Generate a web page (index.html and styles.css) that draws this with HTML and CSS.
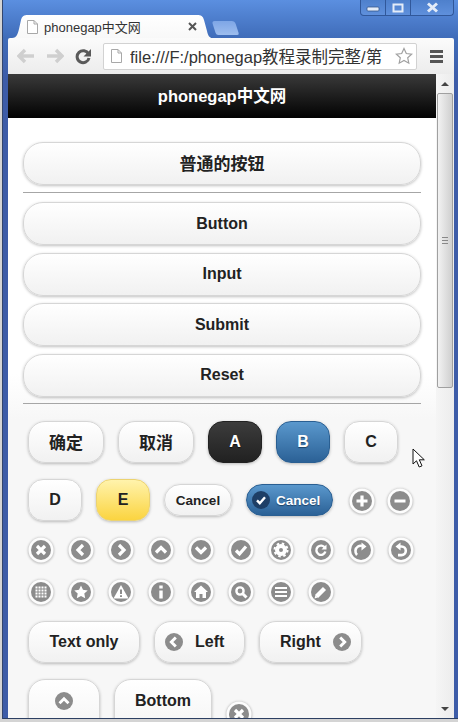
FILE: index.html
```html
<!DOCTYPE html>
<html lang="zh-CN">
<head>
  <meta charset="UTF-8">
  <meta name="viewport" content="width=device-width, initial-scale=1.0">
  <title>phonegap中文网</title>
  <link rel="stylesheet" href="styles.css">
</head>
<body>
  <svg class="sprite" xmlns="http://www.w3.org/2000/svg">
    <symbol id="i-x" viewBox="0 0 20 20"><path d="M6 6l8 8M14 6l-8 8"/></symbol>
    <symbol id="i-left" viewBox="0 0 20 20"><path d="M12 5l-5 5 5 5"/></symbol>
    <symbol id="i-right" viewBox="0 0 20 20"><path d="M8 5l5 5-5 5"/></symbol>
    <symbol id="i-up" viewBox="0 0 20 20"><path d="M5 12.5l5-5 5 5"/></symbol>
    <symbol id="i-down" viewBox="0 0 20 20"><path d="M5 7.5l5 5 5-5"/></symbol>
    <symbol id="i-check" viewBox="0 0 20 20"><path d="M5 10.5l3.5 3.5L15 6.5"/></symbol>
    <symbol id="i-plus" viewBox="0 0 20 20"><path d="M10 4.5v11M4.5 10h11"/></symbol>
    <symbol id="i-minus" viewBox="0 0 20 20"><path d="M4.5 10h11"/></symbol>
    <symbol id="i-gear" viewBox="0 0 20 20">
      <circle cx="10" cy="10" r="4" stroke-width="4"/>
      <circle cx="10" cy="10" r="6.5" stroke-width="2" stroke-dasharray="2.5 2.6"/>
    </symbol>
    <symbol id="i-refresh" viewBox="0 0 20 20">
      <path d="M14 8a4.6 4.6 0 1 0 .4 3.5" stroke-width="2.4"/>
      <path d="M15.5 4.5v5h-5z" fill="#fff" stroke="none"/>
    </symbol>
    <symbol id="i-forward" viewBox="0 0 20 20">
      <path d="M6 15a5.5 5.5 0 0 1 1-8.5 5 5 0 0 1 4-.5" stroke-width="2.6"/>
      <path d="M10.5 2.5l5 4-5 4z" fill="#fff" stroke="none"/>
    </symbol>
    <symbol id="i-back" viewBox="0 0 20 20">
      <path d="M8 6.5h2.5a4.3 4.3 0 0 1 0 8.6H7" stroke-width="2.6"/>
      <path d="M9.5 2.5l-5 4 5 4z" fill="#fff" stroke="none"/>
    </symbol>
    <symbol id="i-grid" viewBox="0 0 20 20">
      <path d="M4.5 5.5h11M4.5 8.5h11M4.5 11.5h11M4.5 14.5h11" stroke-width="2" stroke-dasharray="2 1"/>
    </symbol>
    <symbol id="i-star" viewBox="0 0 20 20">
      <path d="M10 3.5l2 4.3 4.7.6-3.4 3.2.9 4.7-4.2-2.3-4.2 2.3.9-4.7-3.4-3.2 4.7-.6z" fill="#fff" stroke="none"/>
    </symbol>
    <symbol id="i-alert" viewBox="0 0 20 20">
      <path d="M10 3l7.5 13.5h-15z" fill="#fff" stroke="none"/>
      <path d="M10 7.5v4.5M10 13.2v1.8" stroke="#8c8c8c" stroke-width="2"/>
    </symbol>
    <symbol id="i-info" viewBox="0 0 20 20">
      <path d="M10 3.5v3M10 8.5v8" stroke-width="3.4"/>
    </symbol>
    <symbol id="i-home" viewBox="0 0 20 20">
      <path d="M10 3.5l7 6.5h-2v6h-3.5v-4h-3v4H5v-6H3z" fill="#fff" stroke="none"/>
    </symbol>
    <symbol id="i-search" viewBox="0 0 20 20">
      <circle cx="9" cy="9" r="3.6" stroke-width="2.4"/>
      <path d="M11.5 11.5l4 4" stroke-width="3"/>
    </symbol>
    <symbol id="i-bars" viewBox="0 0 20 20">
      <path d="M4 6h12M4 10h12M4 14h12" stroke-width="2.2"/>
    </symbol>
    <symbol id="i-edit" viewBox="0 0 20 20">
      <path d="M5.5 14.5l8-8" stroke-width="4.4"/>
      <path d="M3.5 16.5l1-3.2 2.2 2.2z" fill="#fff" stroke="none"/>
    </symbol>
  </svg>

  <div class="window">
    <div class="titlebar">
      <div class="tab">
        <svg class="file-icon" width="11" height="14" viewBox="0 0 11 14"><path d="M.5.5h6.5l3.5 3.5v9.500H.5zM7 .5V4h3.500" fill="#fff" stroke="#a8a8a8"/></svg>
        <span class="tab-title">phonegap中文网</span>
        <svg class="tab-close" width="9" height="9" viewBox="0 0 9 9"><path d="M1 1l7 7M8 1L1 8" stroke="#555" stroke-width="2"/></svg>
      </div>
      <div class="new-tab"></div>
      <div class="win-controls">
        <div class="win-btn win-min"><svg width="14" height="8" viewBox="0 0 14 8"><rect x="1" y="3" width="12" height="4" rx="1" fill="#e4ecf8" stroke="#34558c" stroke-width=".8"/></svg></div>
        <div class="win-btn win-max"><svg width="12" height="10" viewBox="0 0 12 10"><rect x="1.500" y="1.500" width="9" height="7" fill="none" stroke="#e4ecf8" stroke-width="2"/></svg></div>
        <div class="win-btn win-close"><svg width="13" height="11" viewBox="0 0 13 11"><path d="M2 1.500l9 8M11 1.500l-9 8" stroke="#e4ecf8" stroke-width="3"/></svg></div>
      </div>
    </div>

    <div class="toolbar">
      <svg class="nav-icon" width="18" height="16" viewBox="0 0 18 16"><path d="M8 2L2 8l6 6M3 8h14" fill="none" stroke="#cfcfcf" stroke-width="3.400"/></svg>
      <svg class="nav-icon" width="18" height="16" viewBox="0 0 18 16"><path d="M10 2l6 6-6 6M15 8H1" fill="none" stroke="#cfcfcf" stroke-width="3.400"/></svg>
      <svg class="nav-icon" width="17" height="17" viewBox="0 0 17 17"><path d="M13.500 6a6 6 0 1 0 .5 4" fill="none" stroke="#5a5a5a" stroke-width="3"/><path d="M16 1v7.500H8.500z" fill="#5a5a5a"/></svg>
      <div class="omnibox">
        <svg width="11" height="14" viewBox="0 0 11 14"><path d="M.5.5h6.500l3.500 3.500v9.500H.5zM7 .5V4h3.500" fill="#fff" stroke="#a8a8a8"/></svg>
        <span class="url">file:///F:/phonegap教程录制完整/第</span>
        <svg width="18" height="18" viewBox="0 0 18 18"><path d="M9 1.500l2.300 5 5.400.6-4 3.700 1.100 5.400L9 13.500l-4.800 2.700 1.100-5.400-4-3.700 5.400-.6z" fill="#fff" stroke="#a0a0a0" stroke-width="1.200"/></svg>
      </div>
      <div class="menu-icon"><i></i><i></i><i></i></div>
    </div>

    <div class="frame">
      <div class="page">
        <header class="page-header">phonegap中文网</header>
        <main class="content">
          <button class="btn btn-block btn-cjk">普通的按钮</button>
          <hr class="rule rule-first">
          <div class="stack">
            <button class="btn btn-block">Button</button>
            <button class="btn btn-block">Input</button>
            <button class="btn btn-block">Submit</button>
            <button class="btn btn-block">Reset</button>
          </div>
          <hr class="rule rule-second">

          <div class="inline-group">
            <div class="btn-row">
              <button class="btn btn-cjk btn-word">确定</button>
              <button class="btn btn-cjk btn-word">取消</button>
              <button class="btn btn-square btn-dark">A</button>
              <button class="btn btn-square btn-blue">B</button>
              <button class="btn btn-square">C</button>
            </div>
            <div class="btn-row row-center">
              <button class="btn btn-square">D</button>
              <button class="btn btn-square btn-yellow">E</button>
              <button class="btn btn-mini">Cancel</button>
              <button class="btn btn-mini btn-blue btn-check">
                <span class="check-badge"><svg class="glyph" width="16" height="16"><use href="#i-check"/></svg></span>Cancel
              </button>
              <svg class="icon icon-inline"><use href="#i-plus"/></svg>
              <svg class="icon icon-inline"><use href="#i-minus"/></svg>
            </div>

            <div class="icon-grid">
              <svg class="icon"><use href="#i-x"/></svg>
              <svg class="icon"><use href="#i-left"/></svg>
              <svg class="icon"><use href="#i-right"/></svg>
              <svg class="icon"><use href="#i-up"/></svg>
              <svg class="icon"><use href="#i-down"/></svg>
              <svg class="icon"><use href="#i-check"/></svg>
              <svg class="icon"><use href="#i-gear"/></svg>
              <svg class="icon"><use href="#i-refresh"/></svg>
              <svg class="icon"><use href="#i-forward"/></svg>
              <svg class="icon"><use href="#i-back"/></svg>
              <svg class="icon"><use href="#i-grid"/></svg>
              <svg class="icon"><use href="#i-star"/></svg>
              <svg class="icon"><use href="#i-alert"/></svg>
              <svg class="icon"><use href="#i-info"/></svg>
              <svg class="icon"><use href="#i-home"/></svg>
              <svg class="icon"><use href="#i-search"/></svg>
              <svg class="icon"><use href="#i-bars"/></svg>
              <svg class="icon"><use href="#i-edit"/></svg>
            </div>

            <div class="btn-row">
              <button class="btn btn-text">Text only</button>
              <button class="btn btn-left"><svg class="icon-flat"><use href="#i-left"/></svg>Left</button>
              <button class="btn btn-right">Right<svg class="icon-flat"><use href="#i-right"/></svg></button>
            </div>
            <div class="btn-row">
              <button class="btn btn-tall btn-top"><svg class="icon-flat"><use href="#i-up"/></svg></button>
              <button class="btn btn-tall btn-bottom">Bottom</button>
              <svg class="icon icon-low"><use href="#i-x"/></svg>
            </div>
          </div>
        </main>
      </div>

      <div class="scrollbar">
        <div class="arrow arrow-up"></div>
        <div class="thumb"><span class="grip"></span></div>
        <div class="arrow arrow-down"></div>
      </div>

      <svg class="cursor" width="15" height="21" viewBox="0 0 15 21"><path d="M1 1v15l3.500-3.200 2.700 6.200 2.800-1.200-2.700-6h5z" fill="#fff" stroke="#111"/></svg>
    </div>
  </div>
</body>
</html>
```

FILE: styles.css
```css
html, body {
  margin: 0;
  padding: 0;
}

body {
  width: 458px;
  height: 722px;
  overflow: hidden;
  background: #d4d4d4;
  font-family: "Liberation Sans", "Noto Sans CJK SC", sans-serif;
  color: #222;
}

.sprite {
  display: none;
}

/* browser window */
.window {
  margin-left: 3px;
  height: 719px;
  box-sizing: border-box;
  padding: 0 4px 0 5px;
  display: flex;
  flex-direction: column;
  background: linear-gradient(180deg, #5b8fe0 0, #3f6cb9 38px, #3d5ca8 80px);
  border-bottom: 1px solid #2c3f62;
  box-shadow: -1px 0 0 #33466e;
}

.titlebar {
  height: 38px;
  flex: none;
  display: flex;
  align-items: flex-end;
  position: relative;
}

.tab {
  width: 200px;
  height: 23px;
  margin-left: 4px;
  display: flex;
  align-items: center;
  background: linear-gradient(180deg, #fff, #f8f8f8);
  clip-path: path("M0 23 C5 23 6 18 7 14 L9 5 C10 1 12 0 16 0 L185 0 C189 0 191 1 192 5 L195 16 C196 21 198 23 200 23 Z");
}

.file-icon {
  margin-left: 15px;
  flex: none;
}

.tab-title {
  margin-left: 6px;
  font-size: 13px;
  color: #333;
  white-space: nowrap;
}

.tab-close {
  margin-left: auto;
  margin-right: 15px;
}

.new-tab {
  width: 23px;
  height: 14px;
  margin: 0 0 3px 2px;
  background: linear-gradient(180deg, #7ea6e6, #9dbdee);
  border-radius: 3px 3px 2px 2px;
  transform: skewX(18deg);
}

.win-controls {
  position: absolute;
  top: 0;
  right: 0;
  height: 15px;
  display: flex;
  background: linear-gradient(180deg, #4e80cc, #5f90dc);
  border: 1px solid #31589a;
  border-top: none;
  border-radius: 0 0 4px 4px;
}

.win-btn {
  display: flex;
  align-items: center;
  justify-content: center;
  width: 24px;
  border-left: 1px solid #31589a;
}

.win-min {
  border-left: none;
}

.win-close {
  width: 42px;
}

.toolbar {
  height: 36px;
  flex: none;
  display: flex;
  align-items: center;
  padding-left: 9px;
  background: linear-gradient(180deg, #fbfbfb, #ececec);
  border-radius: 2px 2px 0 0;
}

.nav-icon {
  flex: none;
  margin-right: 11px;
}

.omnibox {
  width: 314px;
  height: 27px;
  box-sizing: border-box;
  display: flex;
  align-items: center;
  gap: 8px;
  padding: 0 3px 0 7px;
  background: #fff;
  border: 1px solid #d2d2d2;
  border-radius: 2px;
}

.url {
  flex: 1;
  overflow: hidden;
  white-space: nowrap;
  font-size: 16.5px;
  color: #333;
}

.menu-icon {
  margin-left: 13px;
  display: flex;
  flex-direction: column;
  gap: 2px;
}

.menu-icon i {
  display: block;
  width: 13px;
  height: 3px;
  background: #555;
}

/* page area */
.frame {
  flex: 1;
  min-height: 0;
  display: flex;
  position: relative;
  overflow: hidden;
}

.page {
  width: 428px;
  flex: none;
  overflow: hidden;
  background: linear-gradient(180deg, #fff 0, #fff 300px, #f7f7f7 345px);
}

.page-header {
  height: 44px;
  line-height: 44px;
  text-align: center;
  font-size: 16.5px;
  font-weight: bold;
  color: #fff;
  background: linear-gradient(180deg, #3a3a3a, #020202);
}

.content {
  padding: 24px 15px 0;
}

.rule {
  margin: 0;
  border: none;
  height: 1px;
  background: #a6a6a6;
}

.rule-first {
  margin: 7px 0 9px;
}

.rule-second {
  margin: 6.500px 0 17px;
}

.stack {
  display: flex;
  flex-direction: column;
  gap: 7.500px;
}

.btn {
  height: 42px;
  box-sizing: border-box;
  padding: 0 21px;
  font-family: inherit;
  font-size: 16px;
  font-weight: bold;
  color: #222;
  background: linear-gradient(180deg, #fff, #f1f1f1);
  border: 1px solid #d6d6d6;
  border-radius: 17px;
  box-shadow: 0 1px 3px rgba(0, 0, 0, 0.25);
  white-space: nowrap;
}

.btn-block {
  display: block;
  width: 100%;
  height: 43px;
  border-radius: 20px;
}

.btn-cjk {
  font-size: 17px;
  padding-bottom: 2px;
}

.btn-word {
  width: 76px;
  padding-left: 0;
  padding-right: 0;
}

.btn-text {
  width: 112px;
  padding: 0;
}

.btn-square {
  width: 54px;
  padding: 0;
  border-radius: 15px;
}

.btn-dark {
  color: #fff;
  background: linear-gradient(180deg, #3c3c3c, #212121);
  border-color: #222;
  text-shadow: 0 1px 1px #111;
}

.btn-blue {
  color: #fff;
  background: linear-gradient(180deg, #5a98cd, #2b6196);
  border-color: #2a5f92;
  text-shadow: 0 1px 1px #1d4266;
}

.btn-yellow {
  background: linear-gradient(180deg, #fff3ac, #fbd440);
  border-color: #ecd371;
}

.inline-group {
  padding-left: 5px;
}

.btn-row {
  display: flex;
  align-items: flex-start;
  gap: 14px;
  margin-bottom: 16px;
}

.row-center {
  align-items: center;
}

.btn-mini {
  width: 68px;
  height: 32px;
  padding: 0;
  font-size: 13.500px;
  border-radius: 16px;
}

.btn-check {
  width: 87px;
  display: flex;
  align-items: center;
  gap: 6px;
  padding: 0 0 0 5px;
}

.check-badge {
  width: 18px;
  height: 18px;
  display: flex;
  align-items: center;
  justify-content: center;
  background: #1e3f66;
  border-radius: 50%;
}

.glyph {
  fill: none;
  stroke: #fff;
  stroke-width: 3;
}

/* round icons */
.icon {
  width: 20px;
  height: 20px;
  flex: none;
  fill: none;
  stroke: #fff;
  stroke-width: 3.2;
  background: #8c8c8c;
  border-radius: 50%;
  box-shadow: 0 0 0 2.500px #fdfdfd, 0 0.500px 2px 3.500px #c9c9c9;
}

.icon-inline {
  margin: 2px 0 0 4.500px;
}

.icon-low {
  margin: 25px 0 0 3px;
}

.icon-grid {
  display: flex;
  flex-wrap: wrap;
  gap: 22px 20px;
  padding: 3px;
  margin: 16px 0 16px;
}

.icon-flat {
  width: 18px;
  height: 18px;
  flex: none;
  fill: none;
  stroke: #fff;
  stroke-width: 3.2;
  background: #8c8c8c;
  border-radius: 50%;
}

.btn-left,
.btn-right {
  display: flex;
  align-items: center;
  gap: 12px;
}

.btn-left {
  width: 91px;
  padding: 0 0 0 10px;
}

.btn-right {
  width: 103px;
  padding: 0 0 0 20px;
}

.btn-tall {
  height: 66px;
  display: flex;
  flex-direction: column;
  align-items: center;
  justify-content: flex-start;
  padding: 12px 0 0;
}

.btn-top {
  width: 72px;
}

.btn-bottom {
  width: 98px;
}

.scrollbar {
  flex: 1;
  position: relative;
  display: flex;
  flex-direction: column;
  background: linear-gradient(90deg, #f5f5f5, #ececec);
}

.arrow {
  height: 19px;
  flex: none;
  display: flex;
  align-items: center;
  justify-content: center;
}

.arrow::after {
  content: "";
  border-left: 4px solid transparent;
  border-right: 4px solid transparent;
}

.arrow-up::after {
  border-bottom: 4px solid #444;
}

.arrow-down {
  margin-top: auto;
}

.arrow-down::after {
  border-top: 4px solid #444;
}

.thumb {
  height: 295px;
  margin: 0 1px;
  box-sizing: border-box;
  display: flex;
  align-items: center;
  justify-content: center;
  background: linear-gradient(90deg, #f2f2f2, #cfcfcf);
  border: 1px solid #a0a0a0;
  border-radius: 2px;
}

.grip {
  width: 6px;
  height: 5px;
  border-top: 1px solid #888;
  border-bottom: 1px solid #888;
  background: linear-gradient(180deg, transparent 40%, #888 40%, #888 60%, transparent 60%);
}

.cursor {
  position: absolute;
  left: 404px;
  top: 374px;
}
```
